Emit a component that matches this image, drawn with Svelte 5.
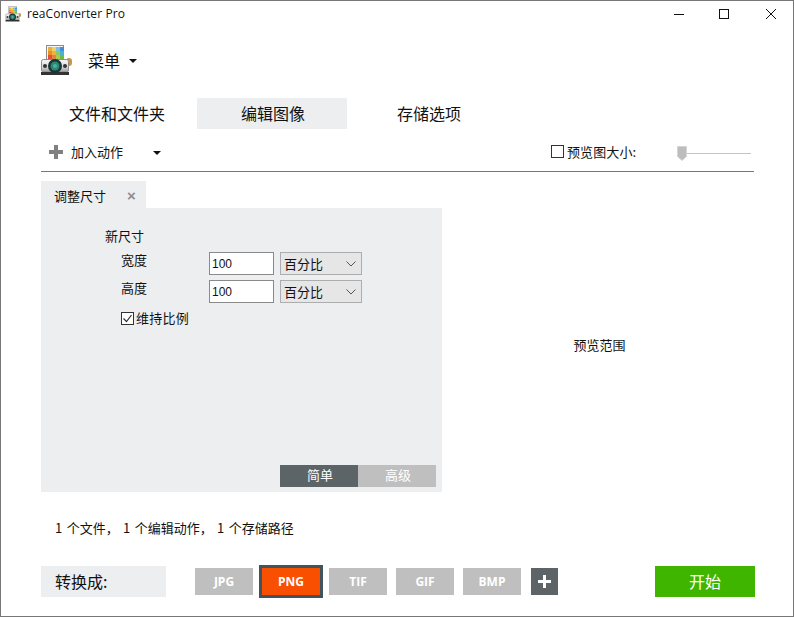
<script>
  const formats = [
    { name: 'JPG', active: false },
    { name: 'PNG', active: true },
    { name: 'TIF', active: false },
    { name: 'GIF', active: false },
    { name: 'BMP', active: false }
  ];
  const rows = ['宽度', '高度'];
  const tiles = [
    { x: 8, y: 3, c: '#e8b23a' }, { x: 12, y: 3, c: '#f0d060' }, { x: 16, y: 3, c: '#7cc0e8' }, { x: 20, y: 3, c: '#3f8fd8' },
    { x: 8, y: 7, c: '#ee8a2c' }, { x: 12, y: 7, c: '#f2b040' }, { x: 16, y: 7, c: '#90c860' }, { x: 20, y: 7, c: '#50b0c8' },
    { x: 8, y: 11, c: '#e0503a' }, { x: 12, y: 11, c: '#e88040' }, { x: 16, y: 11, c: '#a8cc50' }, { x: 20, y: 11, c: '#70b848' }
  ];
</script>

{#snippet appIcon(size)}
  <svg class="app-icon" width={size} height={size} viewBox="0 0 32 32" aria-hidden="true">
    <defs>
      <linearGradient id="bodyfill" x1="0" y1="0" x2="0" y2="1">
        <stop offset="0" stop-color="#fafafa"/>
        <stop offset="0.6" stop-color="#d8d8d8"/>
        <stop offset="1" stop-color="#9c9c9c"/>
      </linearGradient>
    </defs>
    <rect x="6.5" y="1.5" width="17" height="15" fill="#f6f6f6" stroke="#8a8a8a" stroke-width="1"/>
    {#each tiles as t}
      <rect x={t.x} y={t.y} width="4" height="4" fill={t.c}/>
    {/each}
    <rect x="26" y="14" width="6" height="8" rx="3" fill="#d2943c"/>
    <rect x="1.5" y="15.5" width="27" height="12.5" rx="2" fill="url(#bodyfill)" stroke="#8c8c8c" stroke-width="1"/>
    <rect x="1" y="28" width="28" height="3" fill="#333"/>
    <circle cx="5" cy="22" r="2" fill="#333"/>
    <circle cx="25" cy="22" r="2" fill="#333"/>
    <circle cx="15" cy="22" r="7" fill="#1c3434"/>
    <circle cx="15" cy="22" r="4.5" fill="#2a8878"/>
    <circle cx="15" cy="22" r="2" fill="#4fb0a0"/>
  </svg>
{/snippet}

{#snippet caret()}
  <svg class="caret" width="8" height="4" viewBox="0 0 8 4" aria-hidden="true"><path d="M0 0H8L4 4Z" fill="#111"/></svg>
{/snippet}

{#snippet chevron()}
  <svg width="10" height="6" viewBox="0 0 10 6" aria-hidden="true"><path d="M.5 .5L5 5L9.5 .5" fill="none" stroke="#555" stroke-width="1"/></svg>
{/snippet}

<div class="window">
  <header class="titlebar">
    {@render appIcon(16)}
    <span class="title">reaConverter Pro</span>
    <div class="controls">
      <svg width="10" height="10" viewBox="0 0 10 10" aria-hidden="true"><path d="M0 5.5H10" stroke="#111"/></svg>
      <svg width="10" height="10" viewBox="0 0 10 10" aria-hidden="true"><rect x=".5" y=".5" width="9" height="9" fill="none" stroke="#111"/></svg>
      <svg width="10" height="10" viewBox="0 0 10 10" aria-hidden="true"><path d="M0 0L10 10M10 0L0 10" stroke="#111" stroke-width="1"/></svg>
    </div>
  </header>

  <div class="menu">
    {@render appIcon(32)}
    <span class="menu-label">菜单</span>
    {@render caret()}
  </div>

  <nav class="tabs">
    <div class="tab first">文件和文件夹</div>
    <div class="tab current">编辑图像</div>
    <div class="tab last">存储选项</div>
  </nav>

  <div class="toolbar">
    <svg class="plus" width="14" height="14" viewBox="0 0 14 14" aria-hidden="true"><path d="M5 0H9V5H14V9H9V14H5V9H0V5H5Z" fill="#808080"/></svg>
    <span class="add-label">加入动作</span>
    {@render caret()}
    <span class="spacer"></span>
    <span class="box preview-box"></span>
    <span class="preview-label">预览图大小:</span>
    <div class="slider">
      <svg width="10" height="15" viewBox="0 0 10 15" aria-hidden="true"><path d="M.5 .5H9.5V10.5L5 14.5L.5 10.5Z" fill="#bdbdbd" stroke="#d4d4d4"/></svg>
      <span class="track"></span>
    </div>
  </div>

  <div class="content">
    <div class="left">
      <div class="panel-tab">
        <span>调整尺寸</span>
        <span class="tab-close">×</span>
      </div>
      <section class="panel">
        <div class="group-title">新尺寸</div>
        {#each rows as row}
          <div class="field">
            <label class="field-label" for={row}>{row}</label>
            <input id={row} class="num" value="100" />
            <div class="select"><span>百分比</span>{@render chevron()}</div>
          </div>
        {/each}
        <div class="keep">
          <span class="box">
            <svg width="11" height="11" viewBox="0 0 11 11" aria-hidden="true"><path d="M1.5 5.5L4.5 8.5L9.5 2" fill="none" stroke="#333" stroke-width="1.2"/></svg>
          </span>
          <span class="keep-label">维持比例</span>
        </div>
        <div class="modes">
          <div class="mode on">简单</div>
          <div class="mode">高级</div>
        </div>
      </section>
    </div>
    <div class="preview">预览范围</div>
  </div>

  <div class="status">1 个文件， 1 个编辑动作， 1 个存储路径</div>

  <footer class="footer">
    <div class="convert">转换成:</div>
    <div class="formats">
      {#each formats as f}
        <div class="fmt" class:active={f.active}>{f.name}</div>
      {/each}
      <div class="more">
        <svg width="13" height="13" viewBox="0 0 13 13" aria-hidden="true"><path d="M5 0H8V5H13V8H8V13H5V8H0V5H5Z" fill="#fff"/></svg>
      </div>
    </div>
    <div class="start">开始</div>
  </footer>
</div>

<style>
  :global(body) {
    margin: 0;
    background: #fff;
  }
  .window {
    box-sizing: border-box;
    width: 794px;
    height: 617px;
    border: 1px solid #777;
    background: #fff;
    color: #111;
    font-family: "Noto Sans CJK SC", "Noto Sans", sans-serif;
    font-size: 13px;
    overflow: hidden;
  }
  .app-icon {
    display: block;
    flex: none;
  }
  .titlebar {
    display: flex;
    align-items: center;
    height: 25px;
    padding-left: 4px;
  }
  .title {
    margin-left: 6px;
    font-family: "Open Sans", sans-serif;
    font-size: 12px;
    letter-spacing: 0.1px;
  }
  .controls {
    display: flex;
    gap: 35px;
    margin-left: auto;
    margin-right: 17px;
  }
  .controls svg {
    display: block;
  }
  .controls svg:last-child {
    margin-left: 2px;
  }
  .menu {
    display: flex;
    align-items: center;
    height: 32px;
    margin-top: 18px;
    padding-left: 39px;
  }
  .menu-label {
    margin-left: 16px;
    font-size: 16px;
    line-height: 22px;
  }
  .menu .caret {
    margin-left: 9px;
    margin-top: 2px;
  }
  .tabs {
    display: flex;
    height: 31px;
    margin-top: 22px;
    font-size: 16px;
    line-height: 31px;
  }
  .tab {
    text-align: center;
  }
  .first {
    margin-left: 68px;
    width: 96px;
  }
  .current {
    box-sizing: border-box;
    margin-left: 32px;
    width: 150px;
    padding-left: 2px;
    background: #eceef0;
  }
  .last {
    margin-left: 50px;
    width: 64px;
  }
  .toolbar {
    box-sizing: border-box;
    display: flex;
    align-items: center;
    width: 713px;
    height: 43px;
    margin-left: 40px;
    padding: 4px 3px 0 8px;
    border-bottom: 1px solid #777;
  }
  .add-label {
    margin-left: 8px;
    line-height: 18px;
    margin-top: -1px;
  }
  .toolbar .caret {
    margin-left: 30px;
    margin-top: 2px;
  }
  .spacer {
    flex: 1;
  }
  .box {
    box-sizing: border-box;
    display: flex;
    align-items: center;
    justify-content: center;
    flex: none;
    width: 13px;
    height: 13px;
    border: 1px solid #333;
    background: #fff;
  }
  .preview-box {
    margin-top: -1px;
  }
  .preview-label {
    margin-left: 3px;
    margin-top: -1px;
    width: 70px;
    line-height: 18px;
    white-space: nowrap;
    letter-spacing: 0.1px;
  }
  .slider {
    display: flex;
    align-items: center;
    margin-left: 40px;
    margin-top: 3px;
  }
  .slider svg {
    display: block;
  }
  .track {
    display: block;
    width: 64px;
    height: 1px;
    margin-top: -1px;
    background: #c4c4c4;
  }
  .content {
    display: flex;
    margin: 9px 0 0 40px;
  }
  .left {
    width: 401px;
    flex: none;
  }
  .panel-tab {
    display: flex;
    align-items: center;
    width: 105px;
    height: 27px;
    box-sizing: border-box;
    padding: 3px 0 0 13px;
    background: #eceef0;
    line-height: 18px;
  }
  .tab-close {
    margin-left: 21px;
    color: #8e8e8e;
    font-family: "Liberation Sans", sans-serif;
    font-weight: 700;
    font-size: 15px;
  }
  .panel {
    position: relative;
    box-sizing: border-box;
    height: 284px;
    padding: 19px 0 0 64px;
    background: #eceef0;
  }
  .group-title {
    line-height: 18px;
    height: 23px;
  }
  .field {
    display: flex;
    align-items: center;
    height: 23px;
    margin-top: 2px;
    margin-left: 16px;
  }
  .field + .field {
    margin-top: 5px;
  }
  .field-label {
    width: 88px;
    margin-top: -7px;
    line-height: 18px;
  }
  .num {
    box-sizing: border-box;
    width: 65px;
    height: 23px;
    padding: 0 0 0 2px;
    border: 1px solid #8a8a8a;
    border-radius: 0;
    background: #fff;
    font-family: "Liberation Sans", sans-serif;
    font-size: 12px;
    color: #111;
    outline: none;
  }
  .select {
    box-sizing: border-box;
    display: flex;
    align-items: center;
    justify-content: space-between;
    width: 82px;
    height: 23px;
    margin-left: 6px;
    padding: 0 5px 0 3px;
    border: 1px solid #adadad;
    background: #e6e6e6;
    line-height: 18px;
  }
  .keep {
    display: flex;
    align-items: center;
    gap: 2px;
    margin: 6px 0 0 16px;
    line-height: 18px;
  }
  .keep-label {
    letter-spacing: 0.25px;
  }
  .modes {
    position: absolute;
    left: 239px;
    top: 257px;
    display: flex;
    color: #fff;
    line-height: 20px;
    text-align: center;
  }
  .mode {
    box-sizing: border-box;
    width: 78px;
    height: 22px;
    padding-left: 2px;
    background: #bfbfbf;
  }
  .mode.on {
    background: #5c6468;
  }
  .preview {
    flex: 1;
    display: flex;
    align-items: center;
    justify-content: center;
    height: 328px;
    margin-right: 36px;
    line-height: 18px;
  }
  .status {
    margin: 10px 0 0 54px;
    height: 18px;
    line-height: 18px;
    white-space: pre;
    font-size: 13px;
    word-spacing: 1.5px;
    color: #111;
  }
  .footer {
    display: flex;
    align-items: center;
    height: 33px;
    margin: 28px 0 0 40px;
  }
  .convert {
    box-sizing: border-box;
    width: 125px;
    height: 31px;
    padding-left: 14px;
    background: #eceef0;
    font-size: 16px;
    line-height: 30px;
  }
  .formats {
    display: flex;
    align-items: center;
    margin-left: 29px;
  }
  .fmt {
    box-sizing: border-box;
    width: 58px;
    height: 27px;
    margin-right: 9px;
    background: #bfbfbf;
    color: #fff;
    font-family: "Open Sans", sans-serif;
    font-size: 12px;
    font-weight: 700;
    line-height: 27px;
    text-align: center;
  }
  .fmt:first-child {
    margin-right: 0;
  }
  .fmt.active {
    width: 64px;
    height: 33px;
    margin: 0 6px;
    border: 3px solid #41535f;
    background: #f85000;
    line-height: 27px;
  }
  .more {
    display: flex;
    align-items: center;
    justify-content: center;
    width: 27px;
    height: 27px;
    margin-left: 1px;
    background: #5c6468;
  }
  .more svg {
    display: block;
  }
  .start {
    width: 100px;
    height: 31px;
    margin-left: 97px;
    background: #3fb500;
    color: #fff;
    font-size: 16px;
    line-height: 30px;
    text-align: center;
  }
</style>
